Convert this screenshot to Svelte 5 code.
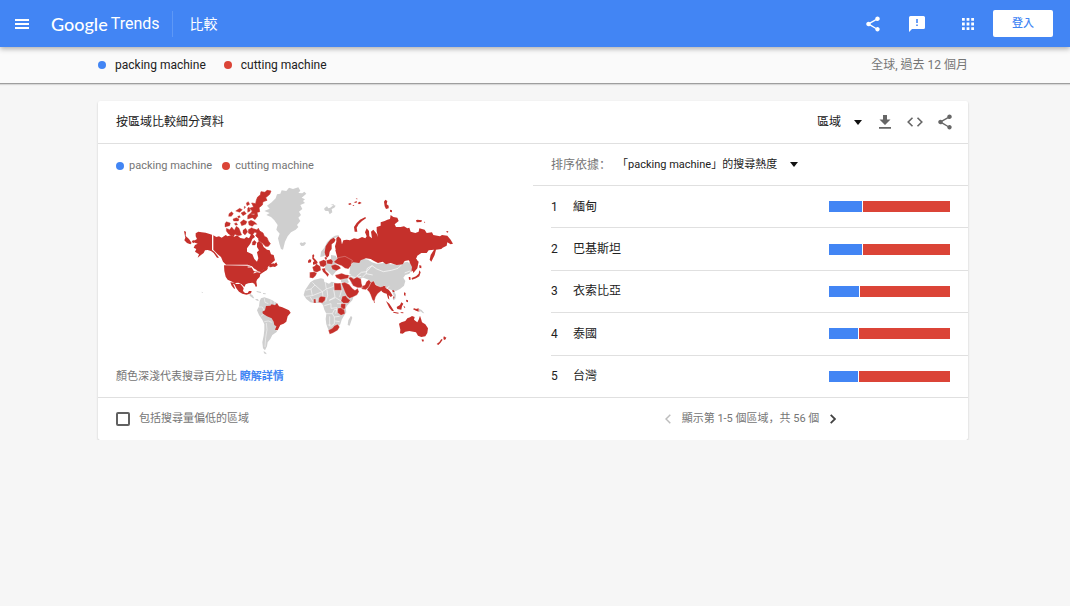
<script>
  const terms = [
    { name: 'packing machine', tone: 'blue' },
    { name: 'cutting machine', tone: 'red' }
  ];
  const rows = [
    { name: '緬甸', share: 27.5 },
    { name: '巴基斯坦', share: 27.5 },
    { name: '衣索比亞', share: 25 },
    { name: '泰國', share: 24 },
    { name: '台灣', share: 24 }
  ];
  let includeLow = $state(false);
</script>

{#snippet shareIcon()}
  <svg viewBox="0 0 24 24" width="18" height="18" aria-hidden="true"><path fill="currentColor" d="M18 16.1c-.8 0-1.4.3-2 .8l-7.100-4.200c.1-.2.1-.5.1-.7s0-.5-.1-.7L16 7.200c.5.5 1.200.8 2 .8 1.700 0 3-1.300 3-3s-1.300-3-3-3-3 1.300-3 3c0 .2 0 .5.1.7L8 9.800C7.500 9.300 6.800 9 6 9c-1.700 0-3 1.300-3 3s1.300 3 3 3c.8 0 1.500-.3 2-.8l7.100 4.200c-.1.2-.1.4-.1.6 0 1.600 1.300 2.900 3 2.900s2.900-1.300 2.900-2.900-1.300-2.900-2.900-2.900z"/></svg>
{/snippet}

<header class="topbar">
  <button class="icon menu" aria-label="選單">
    <svg viewBox="0 0 14 10" width="14" height="10"><path fill="currentColor" d="M0 0h14v2H0zM0 4h14v2H0zM0 8h14v2H0z"/></svg>
  </button>
  <a class="logo" href="#home"><span class="g">Google</span><span class="t">Trends</span></a>
  <h1>比較</h1>
  <div class="tools">
    <button class="icon" aria-label="分享">{@render shareIcon()}</button>
    <button class="icon" aria-label="提供意見">
      <svg viewBox="0 0 16 16" width="16" height="16"><path fill="currentColor" fill-rule="evenodd" d="M1.500 0h13A1.500 1.500 0 0 1 16 1.500v10a1.500 1.500 0 0 1-1.500 1.500H3l-3 3V1.500A1.500 1.500 0 0 1 1.500 0zM7.200 3v4h1.600V3zM7.200 8.500v1.600h1.600V8.500z"/></svg>
    </button>
    <button class="icon apps" aria-label="應用程式">
      <svg viewBox="0 0 13 13" width="12" height="12"><path fill="currentColor" d="M0 0h3v3H0zM5 0h3v3H5zM10 0h3v3h-3zM0 5h3v3H0zM5 5h3v3H5zM10 5h3v3h-3zM0 10h3v3H0zM5 10h3v3H5zM10 10h3v3h-3z"/></svg>
    </button>
    <button class="login">登入</button>
  </div>
</header>

<div class="subbar">
  <ul class="legend large">
    {#each terms as term}<li><i class="dot {term.tone}"></i>{term.name}</li>{/each}
  </ul>
  <span class="scope">全球, 過去 12 個月</span>
</div>

<main>
  <section class="card">
    <div class="card-head">
      <h2>按區域比較細分資料</h2>
      <div class="actions">
        <span class="select region">
          <select aria-label="解析度"><option>區域</option></select>
        </span>
        <button class="icon" aria-label="下載">
          <svg viewBox="0 0 12 14" width="12" height="14"><path fill="currentColor" d="M4 0h4v4.500h3.500L6 10 .5 4.500H4zM0 12h12v1.700H0z"/></svg>
        </button>
        <button class="icon" aria-label="嵌入">
          <svg viewBox="0 0 16 10" width="16" height="10"><path fill="none" stroke="currentColor" stroke-width="1.600" d="M5.500.7 1.200 5l4.300 4.300M10.500.7 14.800 5l-4.300 4.300"/></svg>
        </button>
        <button class="icon" aria-label="分享">{@render shareIcon()}</button>
      </div>
    </div>

    <div class="card-body">
      <div class="map-side">
        <ul class="legend">
          {#each terms as term}<li><i class="dot {term.tone}"></i>{term.name}</li>{/each}
        </ul>
        <svg class="map" viewBox="182 184 274 172" role="img" aria-label="世界地圖">
          <!-- North America -->
          <g transform="translate(175 180) scale(.3333)" class="hot">
            <path d="M62 157L70 152 80 154 92 155 111 161V207L118 212 126 222 132 230 126 230 116 216 108 210 98 207 90 208 86 216 78 222 68 230 72 220 66 216 60 212 64 204 56 200 60 192 68 188 56 184 60 178 66 174 62 166zM27 150L33 152 32 165 42 174 50 186 46 190 36 186 28 178 31 170zM50 180l8-3 2 6-6 4z"/>
            <path d="M115 163L124 168 132 166 140 170 152 162 158 166 170 162 178 167 186 163 196 171 208 173 214 168 222 172 226 164 230 156 236 162 240 168 232 174 226 188 216 202 216 212 232 220 238 234 246 242 250 232 246 214 252 208 246 198 246 186 252 180 262 188 266 198 276 206 284 208 288 220 296 222 300 238 288 248 296 250 304 244 308 252 300 258 290 256 282 254 274 264 262 268 256 274 246 268 236 262 230 256 218 251H153L144 242 138 228 128 220 115 206z"/>
            <path stroke="#c5302b" stroke-width="2" d="M236 144L246 147 250 142 254 150 264 156 268 166 276 170 280 180 286 188 280 196 272 196 262 186 252 180 250 172 242 164 246 156 238 152zM244 58L248 48 256 42 258 32 270 34 276 28 288 30 284 40 272 50 276 58 264 62 262 72 252 80 254 92 246 94 248 106 236 108 240 98 226 98 232 90 224 82 236 78 230 66 242 68z"/>
            <path stroke="#c5302b" stroke-width="1" d="M154 142L164 146 170 138 178 148 184 136 192 142 196 152 200 162 190 164 180 160 176 166 166 162 160 158 154 150zM150 128l4-6 12 4-2 8-14 4zM162 98l8-6 5 6-6 8-8 0zM182 90l12-8 8 4-8 8zM174 114l10-4 8 4-2 6-14 0zM198 96l10-5 6 7-10 6zM196 124l10-8 10 6-4 8-12 4zM204 148l8-6 6 10-8 10-6-6zM218 104l6-6 16 4 6 6-6 8-8-6-14 4zM220 122l8-4 10 4 8 8-8 0-6 6-10-4zM220 146l10-6 10 6-2 10-8 6-10-6zM214 66l6-4 4 8-8 4zM218 82l4-4 4 12-8 4zM232 184l6-6 6 6-4 8-8 0zM178 128l6-3 4 6-6 2zM188 106l6-2 2 5-6 2zM208 76l4 2-4 5z"/>
          </g>
          <g transform="translate(175 260) scale(.3333)">
            <path class="hot" d="M147 13L220 14 230 18 234 26 240 32 248 28 256 31 268 24 280 19 276 27 266 33 256 40 254 48 246 56 244 62 246 74 243 79 238 68 232 65 220 67 212 70 208 78 200 70 190 65 180 66 168 61 158 56 152 47 148 30zM166 64L178 65 184 69 196 69 202 76 206 82 204 90 210 96 218 96 222 90 230 90 228 97 220 100 214 101 202 98 192 92 184 82 178 70 174 68 180 82 178 84 170 74zM282 18l6-9 8-2 4 6-12 6z"/>
            <path fill="none" stroke="#fff" stroke-width="3" d="M218 18l14 0 6 12M236 36l10-4 10 2"/>
            <path class="cold" d="M224 98l8 4 6 10-4 0-10-8zM240 114l8 0 4 5-6 0zM245 90l14 3-2 3-12-3zM264 96l8 1 0 3-8-1zM80 92l4 2-3 3z"/>
            <path class="cold" d="M254 120L258 112 268 109 282 113 292 118 304 125 308 134 296 150 292 166 298 180 306 190 302 200 306 212 292 222 286 234 278 244 276 256 270 268 264 262 262 244 266 224 268 206 268 190 262 176 252 162 246 148 252 136zM266 270l8 6 0 4-7-3z"/>
            <path fill="none" stroke="#fff" stroke-width="1.500" d="M268 112l2 12 10 4M250 138l12 0 6 12M258 166l14-12M268 182l12-2 10 4M274 186l2 20-4 24-2 28M288 118l0 10M298 120l0 10"/>
            <path class="hot" d="M262 152L270 148 273 135 286 134 290 130 300 133 306 126 312 136 322 139 342 148 347 155 338 166 334 182 326 188 316 192 308 208 300 206 304 196 298 192 296 182 290 172 276 166 264 158z"/>
          </g>
          <!-- Greenland, Nordic countries -->
          <g transform="translate(255 180) scale(.3333)">
            <path class="cold" d="M28 90L44 83 36 74 50 64 62 52 66 40 76 38 80 28 94 30 102 20 114 24 130 19 136 29 130 36 142 37 148 32 154 38 140 50 150 55 144 60 150 66 136 72 142 84 132 92 138 102 130 110 136 120 126 132 130 138 122 146 108 154 98 166 90 182 84 206 78 204 73 188 69 172 74 158 64 146 68 132 58 118 48 108 34 102 44 96zM134 188l4-4 4 2 8-3 3 4-6 7-8 1zM208 82l8-6 4 6 6-2 10-8 6 2-4 6-8 4 2 10-8 6-4-10-8 0-4-4zM226 72l10-3 0 4zM196 228L198 212 208 200 216 184 230 170 240 164 252 162 248 168 236 172 224 186 214 204 214 220 206 226zM228 222l14 2 8 14-4 12-18 0z"/>
            <path class="hot" d="M212 226L209 214 212 196 220 184 226 176 236 170 242 176 238 184 230 190 230 204 224 212 222 224 216 230zM242 206L240 196 244 182 244 172 250 166 258 174 260 186 262 196 254 204 246 208zM172 222l4-2 2 4-2 6 6 6 6 8-2 5-12 2 0-8 4-2-6-8zM159 240l4-5 6 1-1 8-8 2zM210 230l4-2 2 6-4 2zM280 68l6-2 4 4-8 2zM296 64l10-4-2 6zM308 66l6-4 6 4-8 4zM292 72l6 0-2 3zM302 54l4-2 2 3z"/>
          </g>
          <!-- Central and eastern Asia -->
          <g transform="translate(370 260) scale(.3333)">
            <path class="cold" d="M-60 18L-50 2 -36 -2 -24 -8 -6 -4 6 4 20 8 44 6 60 10 84 10 96 6 112 2 124 10 128 22 118 38 106 42 100 50 106 60 102 74 90 84 78 90 66 88 56 84 44 78 34 82 20 72 6 66 -4 56 -20 50 -34 54 -50 46 -62 38zM-64 42L-44 44 -26 52 -30 64 -42 72 -56 68zM66 90l6 0 6 12-2 12-6 4-2-6 4-6z"/>
            <path fill="none" stroke="#fff" stroke-width="2" d="M-40 46L-26 34 -10 32 6 14M6 14L20 24 40 32 64 28 84 22 96 10M6 14L-8 22 -12 38 -24 50M-12 38L8 42M104 36L120 30M-58 46L-44 50-26 46M50 82l8-6"/>
          </g>
          <g transform="translate(350 180) scale(.3333)" class="hot">
            <path d="M-40 222L-44 208 -36 200 -38 186 -24 190 -20 178 -10 176 0 178 12 172 24 174 36 168 46 172 50 166 45 154 50 142 57 150 58 166 66 172 63 152 70 146 80 158 84 168 80 150 80 138 92 134 92 124 104 120 112 116 120 114 122 102 130 108 142 110 146 120 134 130 138 138 152 138 162 136 172 142 178 140 182 152 196 156 206 152 208 142 224 146 230 156 246 154 250 162 270 166 276 162 292 164 302 176 309 188 302 190 292 184 290 194 278 200 274 204 258 206 254 222 244 242 239 236 242 222 252 206 236 208 230 216 214 216 202 224 198 234 206 242 202 262 190 276 186 262 188 252 176 238 164 240 158 250 140 252 122 246 108 250 98 242 84 246 72 240 62 234 48 232 32 238 28 246 10 244 2 250 -6 262 -18 256 -24 242 -36 238z"/>
            <path d="M14 152L12 138 20 126 30 116 46 108 48 112 36 120 26 130 20 140 22 152zM102 62l4-6 6 4-2 10 6 4 0 8-8 2-4-8zM120 86l6 2 0 6-6-2zM198 118l4-2 14 2-2 5-14 1zM222 122l4 1-3 3zM290 150l5 1-1 4-5-2z"/>
          </g>
          <!-- Europe, Africa, Middle East, India -->
          <g transform="translate(295 260) scale(.3333)">
            <path class="cold" d="M90 6h34v24l-12 14-12-12-10-8zM46 64L58 56 78 52 86 54 88 62 102 68 110 62 124 66 142 68 148 84 156 98 162 106 176 106 172 118 156 134 152 142 154 154 146 166 140 176 136 190 126 202 106 214 100 206 94 190 92 174 94 158 88 146 84 132 78 126 58 126 46 124 34 114 26 102 30 88 38 76zM160 178l8-14 4 6-8 24-6-2zM138 54l18-2 6 12-10 4-14-4z"/>
            <g fill="none" stroke="#fff" stroke-width="1.700"><path d="M52 64l8 8-12 12-16 4M60 72l22 20 12-8-4-24M48 84l4 20-20 2M52 104l30-12 2 14M94 84l22-8V66M96 86l2 18-6 18M116 86l4 22-18 10M104 118l18-8 16 10M88 134l20-6 0 14 18-2M92 158h20l6 10 16-2M112 158l6-12 12-2M104 166v30M118 168v20l-12 10M98 192h10M120 180l14 2M46 108l8 14M66 110v14M126 142l-4 16M140 86l-6 22M158 116l-8 12M126 128h14"/></g>
            <g class="hot" stroke="#fff" stroke-width=".8">
              <path d="M52 18L60 14 64 8 76 16 78 28 66 34 56 32zM44 34L58 32 66 36 62 44 54 52 44 50zM72 2L86 -4 94 0 94 12 86 18 76 16zM80 23L90 21 92 30 102 40 98 48 92 40 84 32zM94-2l14-4 6 6-2 10-16-2zM108 14l12-4 12 4 6 8-14 7-12-4zM116 3L130 -10 150 -14 172 -2 168 14 160 24 150 22 140 14 128 10zM120 42L130 40 140 37 152 41 162 42 160 52 146 54 136 56 124 50zM88-10l5-3 3 6-4 4z"/>
              <path d="M117 66L129 67 137 66 140 88H118zM139 67L149 64 162 70 172 82 180 88 188 82 192 92 186 102 174 108 164 112 156 106 150 94zM160 50L168 48 176 54 186 48 198 54 200 68 204 80 188 80 174 74 168 62zM200 76L210 72 214 62 222 56 228 64 222 78 212 86 200 84zM216 86L222 76 228 64 236 60 242 72 256 78 272 74 270 84 258 90 248 98 242 108 238 122 232 116 226 100 222 92zM236 120l4 1 0 5-3-1zM72 110l6-4 14 2-2 10-8 8-12-2zM56 114l6 0 1 12-7 0zM142 106l10-2 6 8 8 6-6 8-14 1-8-7zM138 128l14 0-1 14-6 4-8-6zM128 142l12-2 8 6 2 12-12 5-10-8zM100 208L112 202 118 194 128 190 134 198 128 208 114 216 104 220z"/>
            </g>
          </g>
          <!-- South-East Asia and Oceania -->
          <g transform="translate(370 260) scale(.3333)" class="hot">
            <path d="M148 28L152 34 148 46 138 52 126 56 125 51 138 46 146 38zM118 2L140-6 142 12 132 26 124 32 126 18zM148 12l6 2 0 8-6-2zM116 48l5 0 1 8-5 0zM32 84L42 74 48 82 56 86 62 94 68 104 62 108 56 102 58 116 54 112 50 98 42 96 36 92zM70 106l4 2-4 6zM48 120L58 128 66 140 72 150 66 150 58 140zM80 138L90 132 94 124 100 128 96 136 94 146 82 144zM70 152l16 3-1 3-15-3zM100 134l6 4-2 4zM92 154l8 0 0 3-8-1zM102 94l5 2-1 10-4-4zM108 116l6 2 0 6-5-2zM128 144l6-2 4 2 8-2 0 10-8-3zM66 88l6 0 2 5-5 0z"/>
            <path class="cold" d="M147 143l8 4 8 10-5-1-6-5-5 2z"/>
            <path d="M87 188L94 184 106 180 112 172 120 169 126 165 134 168 132 176 142 184 146 176 150 164 154 176 156 184 166 190 174 202 172 216 166 226 154 228 144 224 138 214 130 212 118 210 106 212 98 218 90 217 91 206zM155 235l7 1-2 6-4-1zM222 225l3 4 4 0-2 6-5 2-2-6zM214 234l4 2-7 10-6 6-5-3 8-6z"/>
          </g>
        </svg>
        <p class="note">顏色深淺代表搜尋百分比 <a href="#more">瞭解詳情</a></p>
      </div>

      <div class="list-side">
        <div class="sort">
          <label for="sort">排序依據：</label>
          <span class="select">
            <select id="sort"><option>「packing machine」的搜尋熱度</option></select>
          </span>
        </div>
        <ol>
          {#each rows as row, i}
            <li>
              <span class="rank">{i + 1}</span>
              <span class="name">{row.name}</span>
              <span class="bar"><i class="blue" style:width="{row.share}%"></i><i class="red"></i></span>
            </li>
          {/each}
        </ol>
      </div>
    </div>

    <div class="card-foot">
      <label class="check"><input type="checkbox" bind:checked={includeLow} />包括搜尋量偏低的區域</label>
      <nav>
        <button class="icon prev" aria-label="上一頁" disabled>
          <svg viewBox="0 0 6 10" width="6" height="10"><path fill="none" stroke="currentColor" stroke-width="1.500" d="M5.300.8 1 5l4.300 4.200"/></svg>
        </button>
        <span>顯示第 1-5 個區域，共 56 個</span>
        <button class="icon" aria-label="下一頁">
          <svg viewBox="0 0 6 10" width="6" height="10"><path fill="none" stroke="currentColor" stroke-width="1.800" d="M.7.8 5 5 .7 9.200"/></svg>
        </button>
      </nav>
    </div>
  </section>
</main>

<style>
  :global(body) {
    background: #f6f6f6;
    color: #212121;
    font: 12px/16px Roboto, "Noto Sans CJK TC", sans-serif;
  }
  h1, h2, p, ul, ol { margin: 0; padding: 0; font-weight: 400; list-style: none; }
  a { text-decoration: none; }
  button, select, input { font: inherit; color: inherit; margin: 0; }
  .icon { display: flex; align-items: center; justify-content: center; padding: 0; border: 0; background: none; width: 18px; height: 18px; }
  .icon svg { display: block; flex: none; }

  .topbar {
    position: relative;
    display: flex;
    align-items: center;
    height: 47px;
    box-sizing: border-box;
    padding: 0 17px 0 13px;
    background: #4285f4;
    color: #fff;
    box-shadow: 0 2px 5px rgba(0, 0, 0, .3);
  }
  .logo { display: flex; align-items: center; gap: 3px; height: 26px; margin-left: 20px; padding-right: 12px; border-right: 1px solid #5e98f6; color: #fff; line-height: 24px; }
  .g { font-family: Lato, sans-serif; font-size: 18px; font-weight: 500; }
  .t { font-size: 16px; }
  h1 { margin-left: 17px; font-size: 14px; line-height: 20px; }
  .tools { display: flex; align-items: center; margin-left: auto; gap: 26px; }
  .apps { margin-left: 7px; }
  .login { width: 60px; height: 27px; margin-left: -10px; padding: 0; border: 0; border-radius: 2px; background: #fff; color: #4285f4; font-size: 11px; font-weight: 500; }

  .subbar {
    display: flex;
    align-items: center;
    justify-content: space-between;
    height: 36px;
    padding: 0 102px 0 98px;
    background: #fafafa;
    border-bottom: 1px solid #9e9e9e;
    box-shadow: 0 1px 1px rgba(0, 0, 0, .12);
  }
  .scope { color: #757575; }
  .legend { display: flex; gap: 10px; color: #757575; font-size: 11px; }
  .legend li { display: flex; align-items: center; gap: 5px; }
  .legend.large { gap: 18px; color: #212121; font-size: 12px; }
  .legend.large li { gap: 9px; }
  .dot { width: 8px; height: 8px; border-radius: 50%; }
  .blue { background: #4285f4; }
  .red { background: #db4437; }

  main { padding: 17px 102px 0 98px; }
  .card { background: #fff; border-radius: 2px; box-shadow: 0 1px 2px rgba(0, 0, 0, .22); }
  .card-head { display: flex; align-items: center; justify-content: space-between; height: 42px; padding: 0 14px 0 18px; border-bottom: 1px solid #e0e0e0; }
  h2 { font-size: 12px; }
  .actions { display: flex; align-items: center; gap: 12px; color: #666; }
  .select { position: relative; display: inline-flex; align-items: center; color: #212121; }
  .select::after { content: ""; margin-left: -9px; border: 4px solid transparent; border-top: 5px solid #111; border-bottom: 0; pointer-events: none; }
  .select select { appearance: none; border: 0; padding: 0 21px 0 0; background: none; line-height: 16px; }
  .region { margin-right: 2px; }

  .card-body { display: grid; grid-template-columns: 1fr 1fr; min-height: 254px; }
  .map-side { display: flex; flex-direction: column; padding: 14px 18px 13px; }
  .map { display: block; width: calc(100% - 125px); max-width: 400px; margin: 11px 0 0 66px; aspect-ratio: 274 / 172; }
  .note { margin-top: auto; color: #757575; font-size: 11px; }
  .note a { color: #4285f4; font-weight: 700; }
  .hot { fill: #c5302b; }
  .cold { fill: #cfcfcf; }

  .list-side { display: flex; flex-direction: column; }
  .sort { display: flex; align-items: center; gap: 6px; height: 41px; padding-left: 18px; border-bottom: 1px solid #e0e0e0; }
  .sort label { color: #757575; font-family: Roboto, "Noto Sans CJK SC", sans-serif; }
  .sort select { font-size: 11px; }
  ol { flex: 1; display: grid; grid-auto-rows: 1fr; margin-left: 18px; }
  ol li { display: flex; align-items: center; padding-right: 18px; border-bottom: 1px solid #e0e0e0; }
  .rank { width: 22px; }
  .bar { display: flex; gap: 1px; width: 121px; height: 11px; margin-left: auto; }
  .bar .red { flex: 1; }

  .card-foot { display: grid; grid-template-columns: 1fr 1fr; align-items: center; height: 42px; border-top: 1px solid #e0e0e0; margin-top: -1px; color: #757575; font-size: 11px; }
  .check { display: flex; align-items: center; gap: 9px; padding-left: 18px; }
  .check input { appearance: none; width: 14px; height: 14px; border: 2px solid #616161; border-radius: 2px; }
  .check input:checked { background: #616161; }
  nav { display: flex; align-items: center; justify-content: center; gap: 5px; color: #757575; font-family: Roboto, "Noto Sans CJK SC", sans-serif; }
  nav .icon { color: #424242; }
  nav .prev { color: #bdbdbd; }
</style>
